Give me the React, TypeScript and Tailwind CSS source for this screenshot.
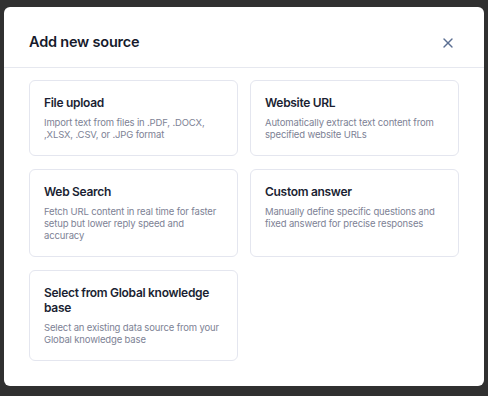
import { X } from "lucide-react";

const sources = [
  {
    title: "File upload",
    description: "Import text from files in .PDF, .DOCX, ,XLSX, .CSV, or .JPG format",
  },
  {
    title: "Website URL",
    description: "Automatically extract text content from specified website URLs",
  },
  {
    title: "Web Search",
    description: "Fetch URL content in real time for faster setup but lower reply speed and accuracy",
  },
  {
    title: "Custom answer",
    description: "Manually define specific questions and fixed answerd for precise responses",
  },
  {
    title: "Select from Global knowledge base",
    description: "Select an existing data source from your Global knowledge base",
  },
];

function SourceCard(props: { title: string; description: string }) {
  return (
    <button className="flex flex-col items-start gap-[7px] rounded-md border border-[#e4e6ef] bg-white p-3.5 text-left hover:bg-gray-50">
      <span className="text-[12px] font-semibold leading-[15px] tracking-[-0.3px] text-[#1b1f33]">
        {props.title}
      </span>
      <span className="text-[9.5px] leading-[12px] tracking-[-0.15px] text-[#7d8295]">{props.description}</span>
    </button>
  );
}

export default function App() {
  return (
    <div
      className="flex h-[396px] w-[488px] items-start bg-[#303030] px-1 pt-[7px]"
      style={{ fontFamily: "Inter, 'Noto Sans', sans-serif" }}
    >
      <div className="flex h-[379px] w-[480px] flex-col rounded-md bg-white">
        <div className="flex items-center justify-between border-b border-[#e6e8ef] pt-[25px] pb-[15px] pl-[25px] pr-[28px]">
          <h2 className="text-[14.5px] font-semibold leading-5 tracking-[-0.2px] text-[#161a2c]">Add new source</h2>
          <X size={16} strokeWidth={2} className="mt-0.5 text-[#5b6f92]" />
        </div>
        <div className="grid grid-cols-2 items-stretch gap-x-3 gap-y-[13px] px-[25px] pt-3">
          {sources.map((s) => (
            <SourceCard key={s.title} title={s.title} description={s.description} />
          ))}
        </div>
      </div>
    </div>
  );
}
